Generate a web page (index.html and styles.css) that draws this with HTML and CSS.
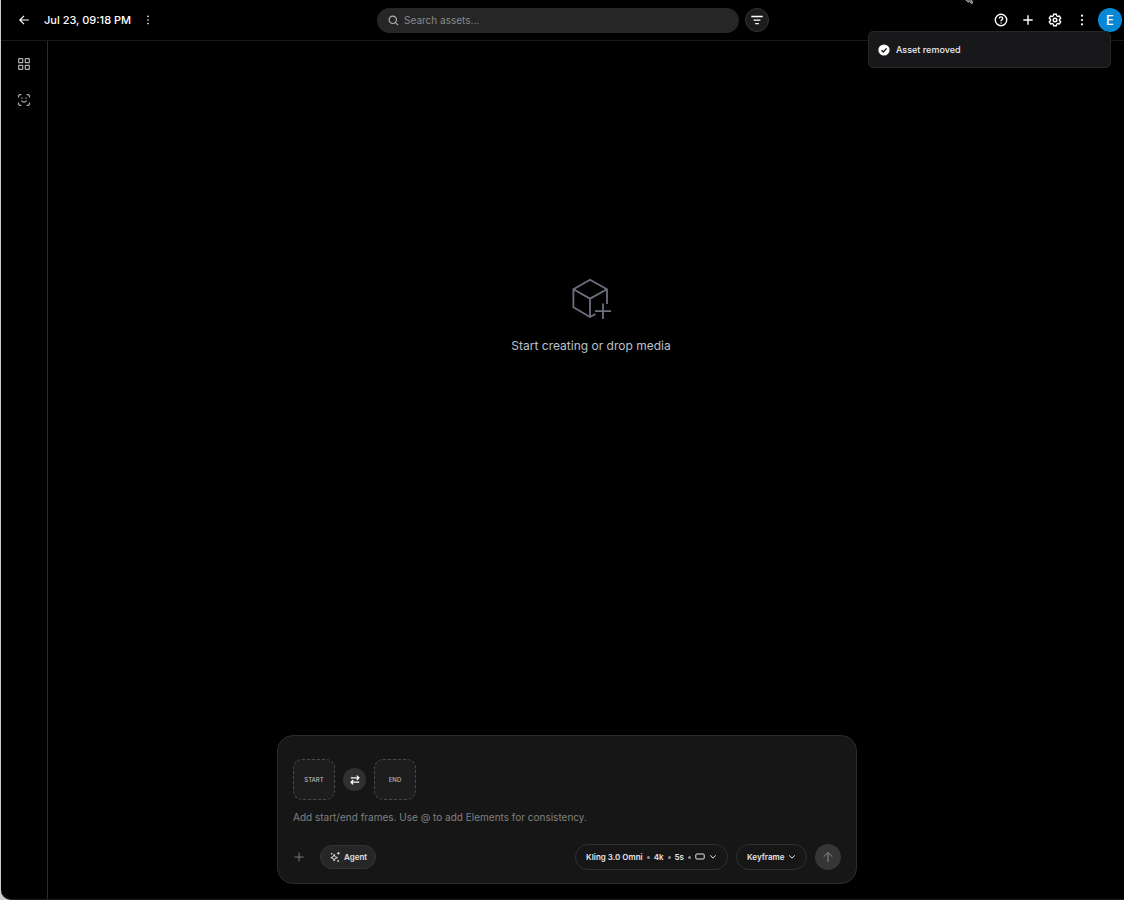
FILE: index.html
```html
<!DOCTYPE html>
<html lang="en">
  <head>
    <meta charset="utf-8" />
    <meta name="viewport" content="width=device-width, initial-scale=1" />
    <title>Jul 23, 09:18 PM</title>
    <link rel="stylesheet" href="styles.css">
  </head>
  <body>
    <div class="app">
      <header class="topbar">
        <div class="topbar-left">
          <button class="icon-btn back-btn" aria-label="Back">
            <svg width="12" height="12" viewBox="0 0 12 12"><path d="M10.8 6H1.8M6 1.8L1.8 6L6 10.2"/></svg>
          </button>
          <h1 class="title">Jul 23, 09:18 PM</h1>
          <button class="icon-btn more-btn" aria-label="Project menu">
            <svg class="dots" width="12" height="12" viewBox="0 0 12 12"><circle cx="6" cy="2.4" r=".8"/><circle cx="6" cy="6" r=".8"/><circle cx="6" cy="9.6" r=".8"/></svg>
          </button>
        </div>

        <div class="search">
          <label class="search-box">
            <svg width="11" height="11" viewBox="0 0 12 12"><circle cx="5.2" cy="5.2" r="4"/><path d="M8.2 8.2L11 11"/></svg>
            <input type="text" placeholder="Search assets..." aria-label="Search assets">
          </label>
          <button class="filter-btn" aria-label="Filter">
            <svg width="12" height="12" viewBox="0 0 12 12"><path d="M.3 2.5H11.7M2.6 6.1H9.4M4.2 9.6H7.8"/></svg>
          </button>
        </div>

        <div class="topbar-right">
          <button class="icon-btn" aria-label="Help">
            <svg width="14" height="14" viewBox="0 0 14 14"><circle cx="7" cy="7" r="5.7"/><path d="M5.3 5.6C5.3 4.5 6 3.9 7 3.9S8.7 4.6 8.7 5.5C8.7 6.7 7 6.8 7 8.2M7 9.4V10.5"/></svg>
          </button>
          <button class="icon-btn" aria-label="New">
            <svg width="14" height="14" viewBox="0 0 14 14"><path d="M7 2.3V11.7M2.3 7H11.7"/></svg>
          </button>
          <button class="icon-btn" aria-label="Settings">
            <svg width="14" height="14" viewBox="0 0 14 14"><path d="M5.7 1.2H8.3L8.7 2.8L9.8 3.5L11.4 3L12.7 5.2L11.5 6.4V7.6L12.7 8.8L11.4 11L9.8 10.5L8.7 11.2L8.3 12.8H5.7L5.3 11.2L4.2 10.5L2.6 11L1.3 8.8L2.5 7.6V6.4L1.3 5.2L2.6 3L4.2 3.5L5.3 2.8Z"/><circle cx="7" cy="7" r="1.8"/></svg>
          </button>
          <button class="icon-btn" aria-label="More">
            <svg class="dots" width="14" height="14" viewBox="0 0 14 14"><circle cx="7" cy="2.7" r="1.1"/><circle cx="7" cy="7" r="1.1"/><circle cx="7" cy="11.3" r="1.1"/></svg>
          </button>
          <button class="avatar">E</button>
        </div>
      </header>

      <div class="body">
        <nav class="sidebar">
          <button class="side-btn" aria-label="Assets">
            <svg width="12" height="12" viewBox="0 0 12 12"><rect x=".7" y=".7" width="4" height="4" rx=".3"/><rect x="7.3" y=".7" width="4" height="4" rx=".3"/><rect x=".7" y="7.3" width="4" height="4" rx=".3"/><rect x="7.3" y="7.3" width="4" height="4" rx=".3"/></svg>
          </button>
          <button class="side-btn" aria-label="Elements">
            <svg width="12" height="12" viewBox="0 0 12 12"><path d="M.6 3.4V2Q.6 .6 2 .6H3.4M8.6 .6H10Q11.4 .6 11.4 2V3.4M11.4 8.6V10Q11.4 11.4 10 11.4H8.6M3.4 11.4H2Q.6 11.4 .6 10V8.6M3.4 6.6Q6 9.6 8.6 6.6M4 3.4V4.8M8 3.4V4.8"/></svg>
          </button>
        </nav>

        <main class="main">
          <div class="empty">
            <svg width="42" height="42" viewBox="0 0 42 42"><path d="M37 26V11.3L20 1.8L3.4 11.3V29.2L20 39L25.5 36M3.4 11.3L20 20.6L37 11.3M20 20.6V39M33 25.5V41M25 33.2H41"/></svg>
            <p>Start creating or drop media</p>
          </div>

          <form class="prompt">
            <div class="frames">
              <button type="button" class="frame">START</button>
              <button type="button" class="swap" aria-label="Swap frames">
                <svg width="10" height="10" viewBox="0 0 10 10"><path d="M.8 2.8H9M6.8 .6L9 2.8L6.8 5M9.2 7.2H1M3.2 5L1 7.2L3.2 9.4"/></svg>
              </button>
              <button type="button" class="frame">END</button>
            </div>
            <textarea class="prompt-text" rows="1" aria-label="Prompt" placeholder="Add start/end frames. Use @ to add Elements for consistency."></textarea>
            <div class="prompt-bar">
              <button type="button" class="add-btn" aria-label="Add media">
                <svg width="12" height="12" viewBox="0 0 12 12"><path d="M6 1.5V10.5M1.5 6H10.5"/></svg>
              </button>
              <button type="button" class="agent-btn">
                <svg width="12" height="12" viewBox="0 0 12 12"><path d="M5.2 3.2L6.1 5.7L8.6 6.6L6.1 7.5L5.2 10L4.3 7.5L1.8 6.6L4.3 5.7ZM9.4 1V3.6M8.1 2.3H10.7M2.6 2V3.4M1.9 2.7H3.3M9.2 9.2V10.8M8.4 10H10"/></svg>
                Agent
              </button>
              <button type="button" class="pill model-btn">
                <span>Kling 3.0 Omni</span><i></i><span>4k</span><i></i><span>5s</span><i></i>
                <svg class="ratio" width="10" height="8" viewBox="0 0 10 8"><rect x=".8" y="1" width="8.4" height="5" rx="1"/></svg>
                <svg width="8" height="8" viewBox="0 0 8 8"><path d="M1.2 2.4L4 5.1L6.8 2.4"/></svg>
              </button>
              <label class="pill mode">
                <select aria-label="Mode">
                  <option>Keyframe</option>
                </select>
                <svg width="8" height="8" viewBox="0 0 8 8"><path d="M1.2 2.4L4 5.1L6.8 2.4"/></svg>
              </label>
              <button type="submit" class="send-btn" aria-label="Generate">
                <svg width="12" height="12" viewBox="0 0 12 12"><path d="M6 11V1.6M1.8 5.6L6 1.6L10.2 5.6"/></svg>
              </button>
            </div>
          </form>
        </main>
      </div>

      <div class="toast" role="status">
        <svg width="12" height="12" viewBox="0 0 12 12"><circle cx="6" cy="6" r="5.6" fill="#fff"/><path d="M3.5 6.2L5.3 8L8.6 4.4" fill="none" stroke="#18181a" stroke-width="1.4"/></svg>
        Asset removed
      </div>
      <svg class="cursor" width="9" height="5" viewBox="0 0 9 5"><path d="M1 0L3 2.2L4.4 1L6.4 3.6L7.8 2.8L6.4 0" fill="#555" stroke="#c4c4c4" stroke-width="1"/></svg>
    </div>
  </body>
</html>
```
FILE: styles.css
```css
* {
  box-sizing: border-box;
}
body {
  margin: 0;
  padding-left: 1px;
  background: #c9cbcc;
  font-family: Inter, "Liberation Sans", sans-serif;
  color: #fff;
}
button,
input,
select,
textarea {
  font: inherit;
  color: inherit;
  background: none;
  border: none;
  padding: 0;
  margin: 0;
  outline: none;
}
button,
select {
  cursor: pointer;
}
svg {
  display: block;
  flex: none;
  fill: none;
  stroke: currentColor;
  stroke-width: 1.2;
}
.dots {
  fill: currentColor;
  stroke: none;
}
.app {
  position: relative;
  display: flex;
  flex-direction: column;
  height: 100vh;
  background: #000;
  border-bottom: 1px solid #1c1c1c;
  border-bottom-left-radius: 10px;
  overflow: hidden;
}

/* top bar */
.topbar {
  display: flex;
  align-items: center;
  justify-content: space-between;
  height: 41px;
  padding: 0 2px 0 9px;
  border-bottom: 1px solid #191919;
}
.topbar-left,
.topbar-right,
.search {
  display: flex;
  align-items: center;
}
.icon-btn {
  display: flex;
  align-items: center;
  justify-content: center;
  width: 27px;
  height: 27px;
}
.topbar-right .icon-btn svg {
  stroke-width: 1.4;
}
.title {
  margin: 0 6px 0 7px;
  font-size: 11px;
  line-height: 16px;
  font-weight: 500;
}
.more-btn {
  width: 22px;
}
.search {
  gap: 6px;
  width: 392px;
}
.search-box {
  flex: 1;
  display: flex;
  align-items: center;
  gap: 5px;
  height: 25px;
  padding: 0 11px;
  border-radius: 13px;
  background: #262626;
  color: #b4b4b4;
}
.search-box input {
  flex: 1;
  min-width: 0;
  font-size: 10px;
}
.search-box input::placeholder {
  color: #8a8a8a;
}
.filter-btn {
  display: flex;
  align-items: center;
  justify-content: center;
  width: 24px;
  height: 24px;
  border: 1px solid #333;
  border-radius: 50%;
  background: #1c1c1c;
}
.filter-btn svg {
  stroke-width: 1.4;
}
.avatar {
  width: 24px;
  height: 24px;
  margin-left: 3px;
  border-radius: 50%;
  background: #0788d6;
  font-size: 13px;
  font-weight: 500;
}

/* sidebar and canvas */
.body {
  flex: 1;
  display: flex;
}
.sidebar {
  display: flex;
  flex-direction: column;
  align-items: center;
  gap: 12px;
  width: 47px;
  padding-top: 11px;
  border-right: 1px solid #2c2c2c;
}
.side-btn {
  display: flex;
  align-items: center;
  justify-content: center;
  width: 24px;
  height: 24px;
  color: #b0b0b0;
}
.main {
  flex: 1;
  display: flex;
  flex-direction: column;
  align-items: center;
  justify-content: space-between;
  padding: 237px 38px 15px 0;
}
.empty {
  display: flex;
  flex-direction: column;
  align-items: center;
  gap: 17px;
  padding-left: 48px;
  color: #6b707d;
}
.empty svg {
  stroke-width: 1.8;
}
.empty p {
  margin: 0;
  font-size: 12px;
  line-height: 18px;
  color: #bcc2cc;
}

/* prompt */
.prompt {
  width: 100%;
  max-width: 580px;
  padding: 23px 15px 13px;
  border: 1px solid #2c2c2c;
  border-radius: 16px;
  background: #161616;
}
.frames {
  display: flex;
  align-items: center;
  gap: 8px;
}
.frame {
  width: 42px;
  height: 41px;
  border: 1px dashed #4a4a4a;
  border-radius: 9px;
  background: #1d1d1d;
  color: #b8b8b8;
  font-size: 6px;
  font-weight: 500;
}
.swap {
  display: flex;
  align-items: center;
  justify-content: center;
  width: 23px;
  height: 23px;
  border-radius: 50%;
  background: #303030;
}
.prompt-text {
  display: block;
  width: 100%;
  height: 16px;
  margin: 9px 0 19px;
  font-size: 10px;
  line-height: 16px;
  resize: none;
  overflow: hidden;
}
.prompt-text::placeholder {
  color: #808080;
}
.prompt-bar {
  display: flex;
  align-items: center;
  gap: 8px;
  font-size: 8px;
  font-weight: 600;
}
.prompt-bar svg {
  stroke-width: 1;
}
.add-btn {
  margin-right: 7px;
  color: #777;
}
.agent-btn {
  display: flex;
  align-items: center;
  gap: 3px;
  height: 24px;
  margin-right: auto;
  padding: 0 8px;
  border: 1px solid #343434;
  border-radius: 12px;
  background: #262626;
  color: #e0e0e0;
}
.pill {
  display: flex;
  align-items: center;
  gap: 4px;
  height: 26px;
  padding: 0 10px;
  border: 1px solid #303030;
  border-radius: 13px;
  color: #e6e6e6;
}
.pill i {
  width: 3px;
  height: 3px;
  border-radius: 50%;
  background: #8c8c8c;
}
.mode {
  gap: 3px;
}
.mode select {
  appearance: none;
}
.send-btn {
  display: flex;
  align-items: center;
  justify-content: center;
  width: 26px;
  height: 26px;
  border-radius: 50%;
  background: #363636;
  color: #8c8c8c;
}

/* overlays */
.toast {
  position: absolute;
  top: 31px;
  right: 13px;
  display: flex;
  align-items: center;
  gap: 6px;
  width: 243px;
  height: 37px;
  padding: 0 9px;
  border: 1px solid #262628;
  border-radius: 5px;
  background: #18181a;
  color: #ededed;
  font-size: 9px;
  font-weight: 500;
}
.toast svg {
  stroke: none;
}
.cursor {
  position: absolute;
  top: 0;
  right: 150px;
}
```
